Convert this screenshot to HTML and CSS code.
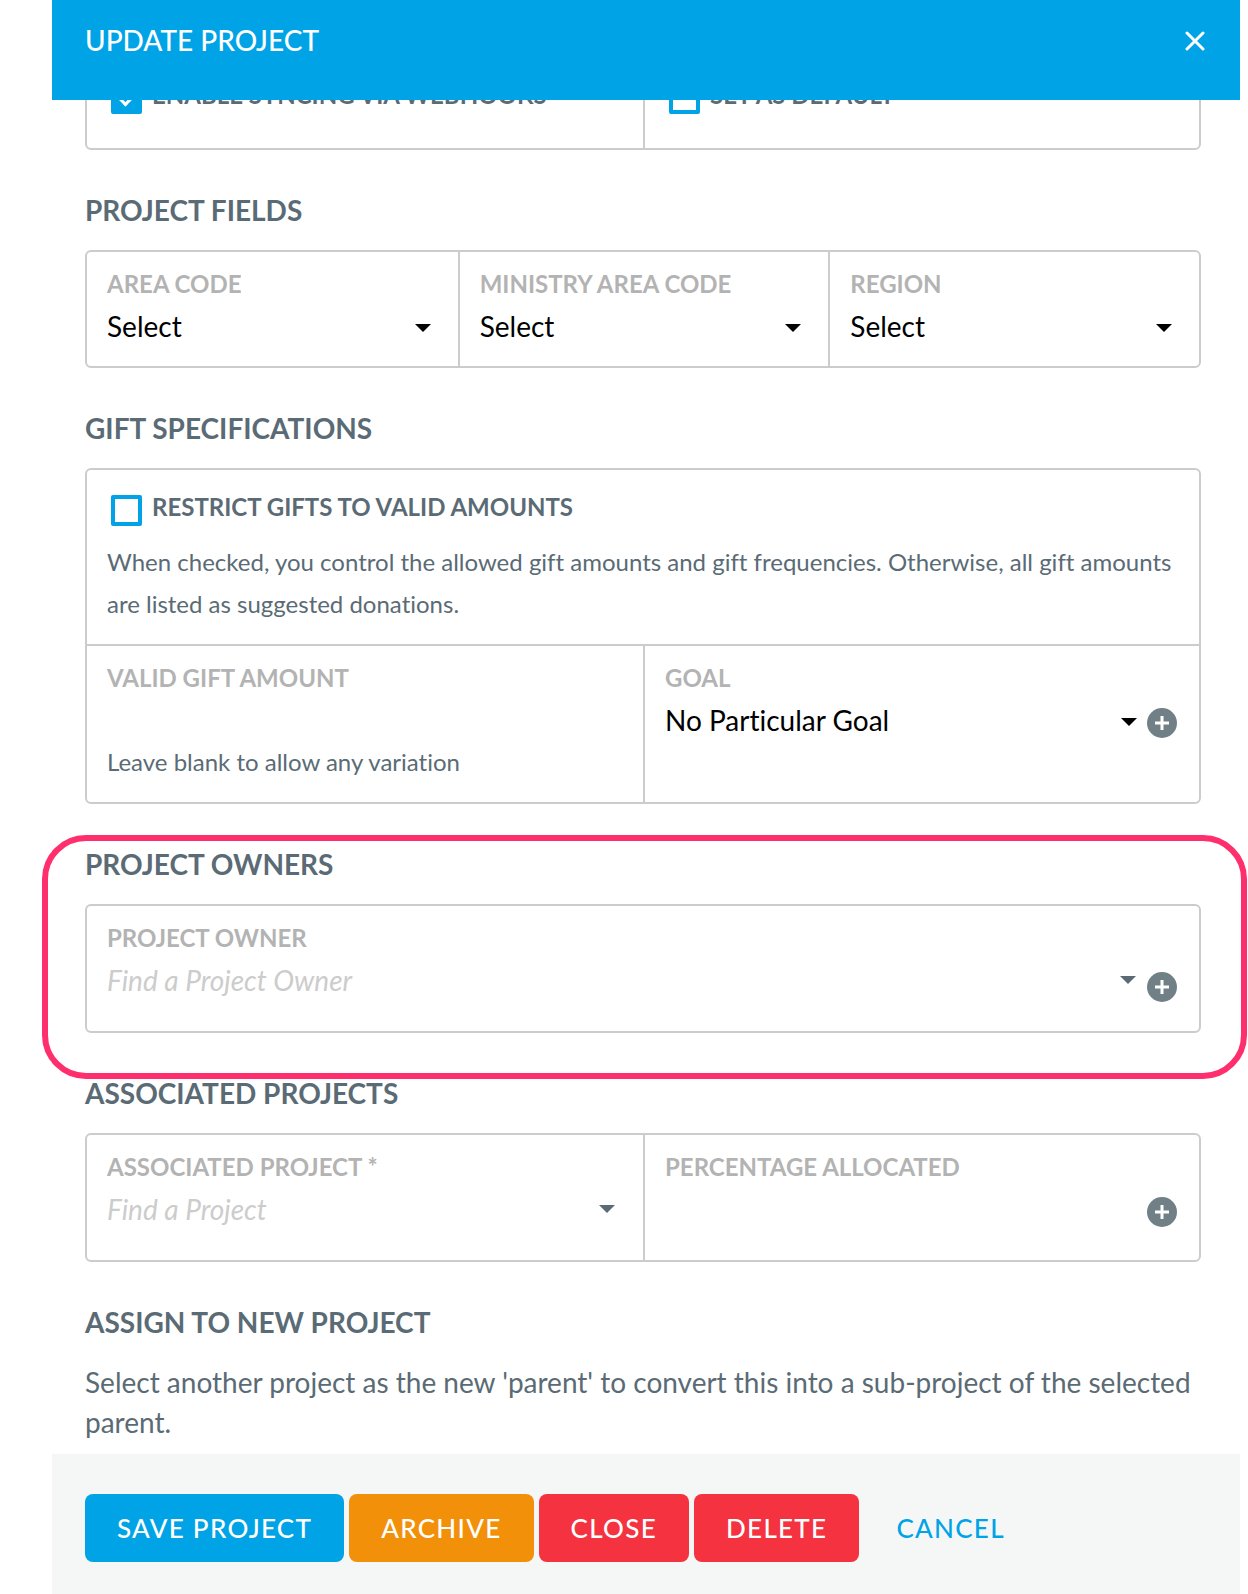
FILE: index.html
```
<!DOCTYPE html>
<html lang="en">
<head>
<meta charset="utf-8">
<meta name="viewport" content="width=device-width, initial-scale=1">
<title>Update Project</title>
<link rel="stylesheet" href="styles.css">
</head>
<body>
<form class="modal">
  <header class="modal-header">
    <h1 class="modal-title">Update Project</h1>
    <button class="close" type="button" aria-label="Close dialog">
      <svg class="close-icon" viewBox="0 0 20 20" aria-hidden="true"><path d="M2 2l16 16M18 2L2 18"/></svg>
    </button>
  </header>

  <main class="modal-body">
    <div class="box box--scrolled cols-2">
      <div class="check-field">
        <label class="check"><input class="checkbox" type="checkbox" checked><span>Enable syncing via webhooks</span></label>
      </div>
      <div class="check-field">
        <label class="check"><input class="checkbox" type="checkbox"><span>Set as default</span></label>
      </div>
    </div>

    <section class="section">
      <h2 class="section-title">Project Fields</h2>
      <div class="box cols-3">
        <div class="field">
          <label class="label" for="area">Area Code</label>
          <div class="row"><div class="picker"><select class="control" id="area"><option>Select</option></select><svg class="caret" viewBox="0 0 16 8" aria-hidden="true"><path d="M0 0h16L8 8z"/></svg></div></div>
        </div>
        <div class="field">
          <label class="label" for="ministry">Ministry Area Code</label>
          <div class="row"><div class="picker"><select class="control" id="ministry"><option>Select</option></select><svg class="caret" viewBox="0 0 16 8" aria-hidden="true"><path d="M0 0h16L8 8z"/></svg></div></div>
        </div>
        <div class="field">
          <label class="label" for="region">Region</label>
          <div class="row"><div class="picker"><select class="control" id="region"><option>Select</option></select><svg class="caret" viewBox="0 0 16 8" aria-hidden="true"><path d="M0 0h16L8 8z"/></svg></div></div>
        </div>
      </div>
    </section>

    <section class="section">
      <h2 class="section-title">Gift Specifications</h2>
      <div class="box">
        <div class="check-field check-field--described">
          <label class="check"><input class="checkbox" type="checkbox"><span>Restrict gifts to valid amounts</span></label>
          <p class="hint">When checked, you control the allowed gift amounts and gift frequencies. Otherwise, all gift amounts are listed as suggested donations.</p>
        </div>
        <div class="cols-2 box-row">
          <div class="field">
            <label class="label" for="amount">Valid Gift Amount</label>
            <div class="row"><input class="control" id="amount" type="text"></div>
            <p class="hint">Leave blank to allow any variation</p>
          </div>
          <div class="field">
            <label class="label" for="goal">Goal</label>
            <div class="row row--add">
              <div class="picker"><select class="control" id="goal"><option>No Particular Goal</option></select><svg class="caret" viewBox="0 0 16 8" aria-hidden="true"><path d="M0 0h16L8 8z"/></svg></div>
              <button class="add" type="button" aria-label="Add goal"><svg class="add-icon" viewBox="0 0 30 30" aria-hidden="true"><circle cx="15" cy="15" r="15"/><path d="M15 8v14M8 15h14"/></svg></button>
            </div>
          </div>
        </div>
      </div>
    </section>

    <section class="section section--marked">
      <h2 class="section-title">Project Owners</h2>
      <div class="box">
        <div class="field field--tall">
          <label class="label" for="owner">Project Owner</label>
          <div class="row row--fill">
            <div class="picker picker--search"><input class="control" id="owner" type="text" placeholder="Find a Project Owner"><svg class="caret" viewBox="0 0 16 8" aria-hidden="true"><path d="M0 0h16L8 8z"/></svg></div>
            <button class="add" type="button" aria-label="Add project owner"><svg class="add-icon" viewBox="0 0 30 30" aria-hidden="true"><circle cx="15" cy="15" r="15"/><path d="M15 8v14M8 15h14"/></svg></button>
          </div>
        </div>
      </div>
    </section>

    <section class="section">
      <h2 class="section-title">Associated Projects</h2>
      <div class="box cols-2">
        <div class="field field--tall">
          <label class="label" for="associated">Associated Project *</label>
          <div class="row"><div class="picker picker--search"><input class="control" id="associated" type="text" placeholder="Find a Project"><svg class="caret" viewBox="0 0 16 8" aria-hidden="true"><path d="M0 0h16L8 8z"/></svg></div></div>
        </div>
        <div class="field field--tall">
          <label class="label" for="percent">Percentage Allocated</label>
          <div class="row row--add">
            <input class="control" id="percent" type="text">
            <button class="add" type="button" aria-label="Add associated project"><svg class="add-icon" viewBox="0 0 30 30" aria-hidden="true"><circle cx="15" cy="15" r="15"/><path d="M15 8v14M8 15h14"/></svg></button>
          </div>
        </div>
      </div>
    </section>

    <section class="section">
      <h2 class="section-title">Assign to New Project</h2>
      <p class="intro">Select another project as the new 'parent' to convert this into a sub-project of the selected parent.</p>
    </section>
  </main>

  <footer class="modal-footer">
    <button class="btn btn--primary" type="submit">Save Project</button>
    <button class="btn btn--archive" type="button">Archive</button>
    <button class="btn btn--danger" type="button">Close</button>
    <button class="btn btn--danger" type="button">Delete</button>
    <a class="btn btn--link" href="#">Cancel</a>
  </footer>
</form>
</body>
</html>
```
FILE: styles.css
```
* {
  box-sizing: border-box;
}

body {
  margin: 0;
  background: #fff;
  color: #5a6b75;
  font-family: Lato, "Open Sans", sans-serif;
  font-size: 28px;
  line-height: 40px;
  font-variant-ligatures: none;
}

h1, h2, p {
  margin: 0;
}

button, input, select {
  font: inherit;
  font-variant-ligatures: none;
}

.modal {
  display: flex;
  flex-direction: column;
  min-height: 100vh;
  margin: 0 8px 0 52px;
}

.modal-header {
  position: sticky;
  top: 0;
  z-index: 2;
  display: flex;
  justify-content: space-between;
  align-items: flex-start;
  height: 100px;
  padding: 20px 32px 0 33px;
  background: #00a4e6;
  color: #fff;
}

.modal-title {
  font-size: 28px;
  font-weight: 500;
  text-transform: uppercase;
}

.close {
  display: flex;
  align-items: center;
  height: 42px;
  padding: 0 3px;
  border: 0;
  background: none;
}

.close-icon {
  width: 20px;
  height: 20px;
  fill: none;
  stroke: #fff;
  stroke-width: 3;
  stroke-linecap: round;
}

.modal-body {
  flex: 1;
  padding: 0 39px 0 33px;
}

.box {
  border: 2px solid #ccc;
  border-radius: 6px;
}

/* first group sits partly under the sticky header */
.box--scrolled {
  margin-top: -44px;
}

.cols-2, .cols-3 {
  display: grid;
  grid-template-columns: repeat(2, minmax(0, 1fr));
}

.cols-3 {
  grid-template-columns: repeat(3, minmax(0, 1fr));
}

.cols-2 > * + *, .cols-3 > * + * {
  border-left: 2px solid #ccc;
}

.box-row {
  border-top: 2px solid #ccc;
}

.section {
  position: relative;
}

.section-title {
  padding: 40px 0 20px;
  font-size: 28px;
  font-weight: 700;
  text-transform: uppercase;
}

.section--marked::after {
  content: "";
  position: absolute;
  inset: 31px -46px -46px -43px;
  border: 6px solid #ff2e6d;
  border-radius: 44px;
  pointer-events: none;
}

.check-field {
  padding: 25px 22px 34px 20px;
}

.check-field--described {
  padding-bottom: 19px;
}

.check {
  display: flex;
  align-items: flex-start;
  gap: 10px;
  margin-left: 4px;
  font-size: 24px;
  font-weight: 700;
  line-height: 24px;
  text-transform: uppercase;
}

.checkbox {
  flex: none;
  appearance: none;
  display: grid;
  place-items: center;
  width: 31px;
  height: 31px;
  margin: 0;
  border: 4px solid #00a4e6;
  border-radius: 2px;
}

.checkbox:checked {
  background: #00a4e6;
}

.checkbox:checked::before {
  content: "";
  width: 6px;
  height: 9px;
  border: solid #fff;
  border-width: 0 3px 3px 0;
  rotate: 45deg;
}

.check + .hint {
  margin-top: 15px;
}

.hint {
  font-size: 24px;
  line-height: 42px;
}

.field {
  padding: 17px 22px 19px 20px;
}

.field--tall {
  display: flex;
  flex-direction: column;
  min-height: 125px;
}

.label {
  display: block;
  margin-bottom: 8px;
  color: #b3b3b3;
  font-size: 24px;
  font-weight: 700;
  line-height: 30px;
  text-transform: uppercase;
}

.row {
  display: flex;
  align-items: flex-start;
  gap: 5px;
}

.row--add {
  min-height: 44px;
}

.row--fill {
  flex: 1;
}

.picker {
  flex: 1;
  display: grid;
  align-items: center;
}

.picker > * {
  grid-area: 1 / 1;
}

.control {
  appearance: none;
  width: 100%;
  height: 40px;
  padding: 0 0 2px;
  border: 0;
  background: none;
  color: #000;
  line-height: 38px;
}

.control::placeholder {
  color: #ccc;
  font-style: italic;
  opacity: 1;
}

.caret {
  justify-self: end;
  width: 16px;
  height: 8px;
  margin: 2px 5px 0 0;
  fill: #000;
  pointer-events: none;
}

.picker--search .caret {
  margin: 0 6px 2px 0;
  fill: #5a6b75;
}

.add {
  display: flex;
  align-self: center;
  flex: none;
  padding: 0;
  border: 0;
  background: none;
}

.add-icon {
  width: 30px;
  height: 30px;
  fill: #718087;
}

.add-icon path {
  stroke: #fff;
  stroke-width: 3;
}

.modal-footer {
  display: flex;
  flex-wrap: wrap;
  gap: 5px;
  padding: 40px 33px 32px;
  background: #f5f7f7;
}

.btn {
  height: 68px;
  padding: 0 32px;
  border: 0;
  border-radius: 8px;
  color: #fff;
  font-size: 26px;
  font-weight: 500;
  line-height: 68px;
  letter-spacing: 0.05em;
  text-decoration: none;
  text-transform: uppercase;
}

.btn--primary {
  background: #00a4e6;
}

.btn--archive {
  background: #f2900a;
}

.btn--danger {
  background: #f53240;
}

.btn--link {
  color: #00a4e6;
}
```
